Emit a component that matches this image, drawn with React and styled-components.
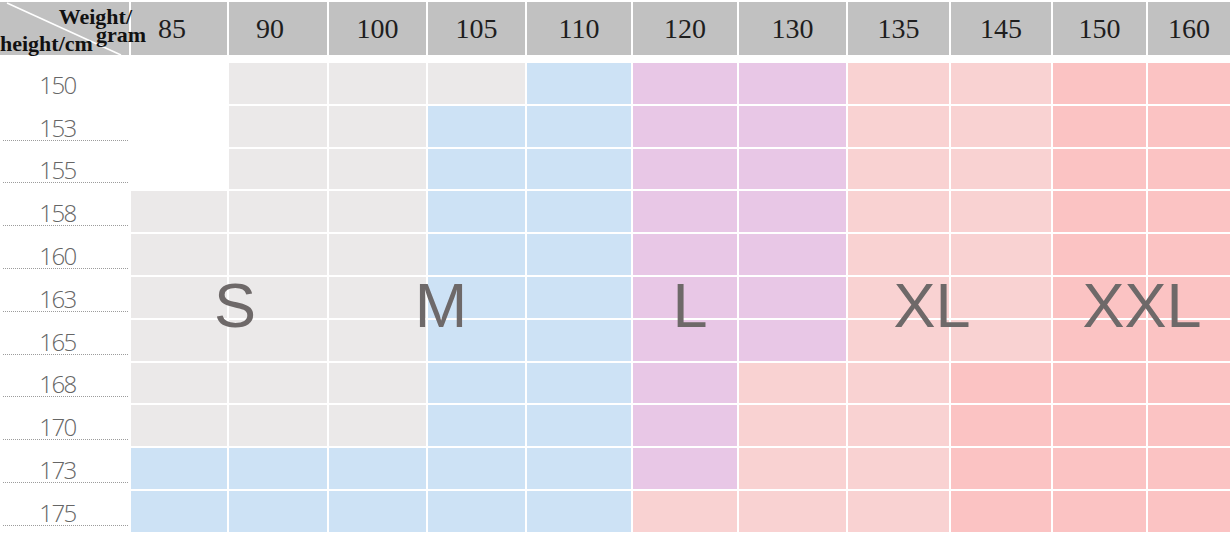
import React from 'react';
import styled, { createGlobalStyle } from 'styled-components';

const GlobalStyle = createGlobalStyle`
  html, body {
    margin: 0;
    padding: 0;
    background: #ffffff;
  }
`;

const colors = {
  w: '#ffffff',
  g: '#ebe9e9',
  b: '#cde2f5',
  p: '#e8c7e6',
  l: '#f9d2d2',
  k: '#fbc3c3',
};

const weights = ['85', '90', '100', '105', '110', '120', '130', '135', '145', '150', '160'];
const widths = '129px 96px 98px 97px 97px 104px 104px 107px 101px 100px 93px 82px';

const rows = [
  ['150', 'wgggbppllkk'],
  ['153', 'wggbbppllkk'],
  ['155', 'wggbbppllkk'],
  ['158', 'gggbbppllkk'],
  ['160', 'gggbbppllkk'],
  ['163', 'gggbbppllkk'],
  ['165', 'gggbbppllkk'],
  ['168', 'gggbbpllkkk'],
  ['170', 'gggbbpllkkk'],
  ['173', 'bbbbbpllkkk'],
  ['175', 'bbbbblllkkk'],
];

const sizes = [
  ['S', 235],
  ['M', 441],
  ['L', 690],
  ['XL', 932],
  ['XXL', 1142],
];

const Chart = styled.div`
  display: flex;
  flex-direction: column;
  gap: 8px;
  padding-top: 2px;
  width: 1230px;
`;

const HeaderRow = styled.div`
  display: grid;
  grid-template-columns: ${widths};
  column-gap: 2px;
  height: 53px;
`;

const Corner = styled.div`
  position: relative;
  z-index: 2;
  display: flex;
  flex-direction: column;
  background: #c1c1c1;
  font-family: 'Liberation Serif', 'Times New Roman', serif;
  font-weight: bold;
  font-size: 22px;
  line-height: 1;
  color: #111;
  padding-top: 4px;

  svg {
    position: absolute;
    inset: 0;
    width: 100%;
    height: 100%;
    z-index: -1;
  }
`;

const CornerTop = styled.span`
  align-self: flex-end;
  margin-right: -3px;
`;

const CornerBottom = styled.div`
  display: flex;
  align-items: flex-start;
  white-space: nowrap;
  margin-top: -4px;

  span:first-child {
    margin-top: 9px;
  }

  span + span {
    margin-left: 3px;
  }
`;

const HeadCell = styled.div`
  display: flex;
  align-items: center;
  justify-content: center;
  background: #c1c1c1;
  font-family: 'Liberation Serif', 'Times New Roman', serif;
  font-size: 28px;
  color: #1e1e1e;
  padding-right: ${p => p.$shift || 0}px;
`;

const Body = styled.div`
  position: relative;
  display: grid;
  grid-template-columns: ${widths};
  grid-auto-rows: 40.8px;
  gap: 2px;
`;

const RowLabel = styled.div`
  display: flex;
  align-items: flex-end;
  justify-content: center;
  margin: 0 1px 6px 3px;
  padding-right: 16px;
  border-bottom: ${p => (p.$line ? '1px dotted #9c9c9c' : '1px solid transparent')};
  font-family: 'Open Sans', 'Liberation Sans', sans-serif;
  font-weight: 300;
  font-size: 24px;
  letter-spacing: -1.6px;
  line-height: 1;
  color: #666666;
`;

const Cell = styled.div`
  background: ${p => colors[p.$tone]};
`;

const SizeMark = styled.span`
  position: absolute;
  top: 211px;
  transform: translateX(-50%);
  font-family: 'Liberation Sans', Arial, sans-serif;
  font-size: 63px;
  line-height: 63px;
  color: #6e6969;
  pointer-events: none;
`;

export default function App() {
  return (
    <>
      <GlobalStyle />
      <Chart>
        <HeaderRow>
          <Corner>
            <svg viewBox="0 0 129 53" preserveAspectRatio="none">
              <line x1="7" y1="1" x2="121" y2="53" stroke="#ffffff" strokeWidth="1.6" />
            </svg>
            <CornerTop>Weight/</CornerTop>
            <CornerBottom>
              <span>height/cm</span>
              <span>gram</span>
            </CornerBottom>
          </Corner>
          {weights.map(w => (
            <HeadCell key={w} $shift={w === '85' ? 14 : w === '90' ? 16 : 0}>
              {w}
            </HeadCell>
          ))}
        </HeaderRow>
        <Body>
          {rows.map(([h, tones], i) => (
            <React.Fragment key={h}>
              <RowLabel $line={i > 0}>{h}</RowLabel>
              {tones.split('').map((t, j) => (
                <Cell key={j} $tone={t} />
              ))}
            </React.Fragment>
          ))}
          {sizes.map(([s, x]) => (
            <SizeMark key={s} style={{ left: x }}>
              {s}
            </SizeMark>
          ))}
        </Body>
      </Chart>
    </>
  );
}
